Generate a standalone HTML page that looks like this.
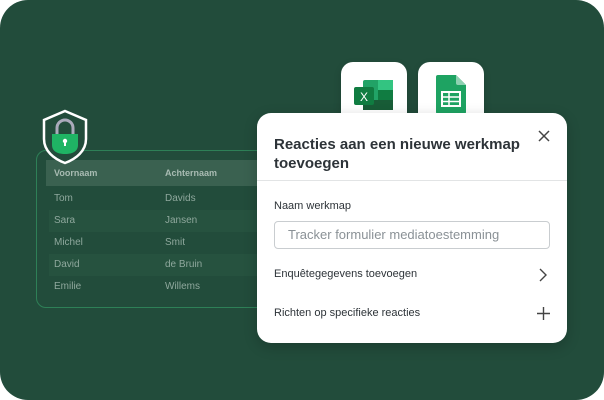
<html><head><style>
body{margin:0;width:604px;height:400px;background:#fff;font-family:"Liberation Sans",sans-serif;overflow:hidden}
.bg{position:absolute;left:0;top:0;width:604px;height:400px;background:#224c3b;border-radius:28px}
.tbl{position:absolute;left:36px;top:150px;width:240px;height:158px;border:1.5px solid #2e8057;border-radius:10px;box-sizing:border-box;overflow:hidden}
.row{position:absolute;left:12px;width:230px;height:22px;font-size:10px;color:#8fa89d;line-height:22px}
.row span{position:absolute}
.card{position:absolute;left:257px;top:113px;width:310px;height:230px;background:#fff;border-radius:14px;box-shadow:0 4px 14px rgba(0,0,0,.2)}
.tile{position:absolute;top:62px;width:66px;height:66px;background:#fff;border-radius:12px;box-shadow:0 3px 8px rgba(0,0,0,.15)}
.t{position:absolute;color:#2d3338}
</style></head><body>
<div class="bg"></div>
<div class="tbl">
<div class="row" style="top:9px;height:26px;line-height:26px;left:9px;width:240px;background:#3a6150;color:#a8bbb2;font-weight:bold;font-size:9px"><span style="left:8px">Voornaam</span><span style="left:119px">Achternaam</span></div>
<div class="row" style="top:37px"><span style="left:5px">Tom</span><span style="left:116px">Davids</span></div>
<div class="row" style="top:59px;background:#26523f"><span style="left:5px">Sara</span><span style="left:116px">Jansen</span></div>
<div class="row" style="top:81px"><span style="left:5px">Michel</span><span style="left:116px">Smit</span></div>
<div class="row" style="top:103px;background:#26523f"><span style="left:5px">David</span><span style="left:116px">de Bruin</span></div>
<div class="row" style="top:125px"><span style="left:5px">Emilie</span><span style="left:116px">Willems</span></div>
</div>
<svg style="position:absolute;left:42px;top:109px" width="48" height="56" viewBox="0 0 48 56">
<path d="M23 2 L44 11 L44 30 C44 42 34 50 23 54 C12 50 2 42 2 30 L2 11 Z" fill="#224c3b" stroke="#fff" stroke-width="2.5"/>
<path d="M15 26 V19 a8 8 0 0 1 16 0 V26" fill="none" stroke="#aab" stroke-width="3"/>
<path d="M10 25 H36 V36 C36 42 31 45 23 45 C15 45 10 42 10 36 Z" fill="#1fb464"/>
<circle cx="23" cy="32" r="2.2" fill="#fff"/><rect x="22" y="32" width="2" height="5" fill="#fff"/>
</svg>
<div class="tile" style="left:341px"><svg width="66" height="66" viewBox="0 0 66 66">
<rect x="22" y="18" width="30" height="30" rx="2" fill="#21a366"/>
<rect x="37" y="18" width="15" height="10" fill="#33c481"/><rect x="37" y="28" width="15" height="10" fill="#107c41"/><rect x="22" y="38" width="30" height="10" fill="#185c37"/>
<rect x="13" y="25" width="20" height="18" rx="2" fill="#107c41"/>
<text x="23" y="39" font-size="12" fill="#fff" text-anchor="middle" font-family="Liberation Sans">X</text></svg></div>
<div class="tile" style="left:418px"><svg width="66" height="66" viewBox="0 0 66 66">
<path d="M18 13 H38 L48 23 V50 a2 2 0 0 1 -2 2 H20 a2 2 0 0 1 -2 -2 V15 a2 2 0 0 1 2 -2Z" fill="#1ea362"/>
<path d="M38 13 L48 23 H40 a2 2 0 0 1-2-2Z" fill="#8ed1b1"/>
<rect x="24" y="30" width="18" height="14" fill="none" stroke="#fff" stroke-width="2"/>
<path d="M24 35 H42 M24 39.5 H42 M31 30 V44" stroke="#fff" stroke-width="1.5"/></svg></div>
<div class="card">
<div class="t" style="left:17px;top:22px;font-size:15px;font-weight:bold;line-height:19px">Reacties aan een nieuwe werkmap<br>toevoegen</div>
<svg style="position:absolute;left:281px;top:17px" width="12" height="12"><path d="M1 1 L11 11 M11 1 L1 11" stroke="#444" stroke-width="1.5"/></svg>
<div style="position:absolute;left:0;right:0;top:67px;border-top:1px solid #e2e4e5"></div>
<div class="t" style="left:17px;top:87px;font-size:11px">Naam werkmap</div>
<div style="position:absolute;left:17px;top:108px;width:276px;height:28px;border:1px solid #c9cdd0;border-radius:4px;box-sizing:border-box;font-size:13px;color:#8a9196;line-height:26px;padding-left:13px">Tracker formulier mediatoestemming</div>
<div class="t" style="left:17px;top:155px;font-size:11px">Enquêtegegevens toevoegen</div>
<svg style="position:absolute;left:281px;top:155px" width="10" height="14"><path d="M2 1 L8 7 L2 13" fill="none" stroke="#444" stroke-width="1.4"/></svg>
<div class="t" style="left:17px;top:194px;font-size:11px">Richten op specifieke reacties</div>
<svg style="position:absolute;left:280px;top:194px" width="13" height="13"><path d="M6.5 0 V13 M0 6.5 H13" stroke="#444" stroke-width="1.4"/></svg>
</div>
</body></html>
